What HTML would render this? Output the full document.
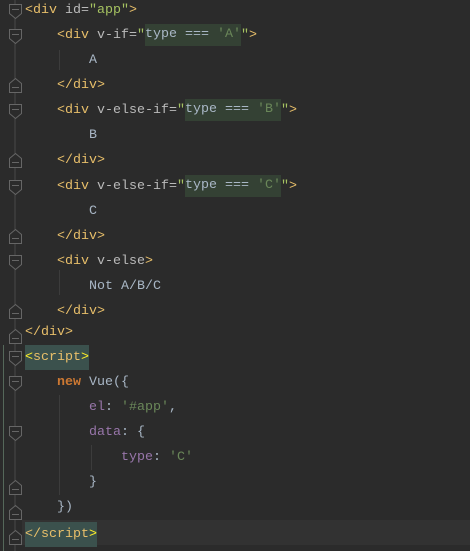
<!DOCTYPE html>
<html><head><style>
html,body{margin:0;padding:0;background:#2b2b2b;width:470px;height:551px;overflow:hidden;position:relative}
.l{position:absolute;left:25px;height:25px;line-height:25px;font-family:"Liberation Mono",monospace;font-size:13.33px;white-space:pre;color:#a9b7c6}
.t{color:#e8bf6a}.a{color:#bababa}.v{color:#a5c261}.s{color:#6a8759}.k{color:#cc7832;font-weight:bold}.p{color:#9876aa}
.hl{background:#344134;display:inline-block;line-height:22px;vertical-align:top;margin-top:1px}.sh{background:#3b514d;display:inline-block;line-height:25px;vertical-align:top}.y{color:#ffef28}
.cur{position:absolute;left:22px;right:0;top:520px;height:25px;background:#323232}
svg{position:absolute;left:0;top:0}
</style></head><body>
<div class="cur"></div>
<svg width="470" height="551">
<line x1="15" y1="0" x2="15" y2="551" stroke="#4a4a4a"/>
<line x1="3.5" y1="345" x2="3.5" y2="551" stroke="#55685a"/>
<line x1="59.5" y1="50" x2="59.5" y2="70" stroke="#3c3c3c"/>
<line x1="59.5" y1="270" x2="59.5" y2="295" stroke="#3c3c3c"/>
<line x1="59.5" y1="395" x2="59.5" y2="495" stroke="#3c3c3c"/>
<line x1="91.5" y1="445" x2="91.5" y2="470" stroke="#3c3c3c"/>
<g fill="#2b2b2b" stroke="#666" stroke-width="1">
<path d="M9.5 4.5h12v9l-6 5l-6-5z"/><line x1="12" y1="9.5" x2="19" y2="9.5"/>
<path d="M9.5 29.5h12v9l-6 5l-6-5z"/><line x1="12" y1="34.5" x2="19" y2="34.5"/>
<path d="M9.5 104.5h12v9l-6 5l-6-5z"/><line x1="12" y1="109.5" x2="19" y2="109.5"/>
<path d="M9.5 180.5h12v9l-6 5l-6-5z"/><line x1="12" y1="185.5" x2="19" y2="185.5"/>
<path d="M9.5 255.5h12v9l-6 5l-6-5z"/><line x1="12" y1="260.5" x2="19" y2="260.5"/>
<path d="M9.5 351.5h12v9l-6 5l-6-5z"/><line x1="12" y1="356.5" x2="19" y2="356.5"/>
<path d="M9.5 376.5h12v9l-6 5l-6-5z"/><line x1="12" y1="381.5" x2="19" y2="381.5"/>
<path d="M9.5 426.5h12v9l-6 5l-6-5z"/><line x1="12" y1="431.5" x2="19" y2="431.5"/>
<path d="M9.5 92.5h12v-9l-6-5l-6 5z"/><line x1="12" y1="87.5" x2="19" y2="87.5"/>
<path d="M9.5 167.5h12v-9l-6-5l-6 5z"/><line x1="12" y1="162.5" x2="19" y2="162.5"/>
<path d="M9.5 243.5h12v-9l-6-5l-6 5z"/><line x1="12" y1="238.5" x2="19" y2="238.5"/>
<path d="M9.5 318.5h12v-9l-6-5l-6 5z"/><line x1="12" y1="313.5" x2="19" y2="313.5"/>
<path d="M9.5 343.5h12v-9l-6-5l-6 5z"/><line x1="12" y1="338.5" x2="19" y2="338.5"/>
<path d="M9.5 494.5h12v-9l-6-5l-6 5z"/><line x1="12" y1="489.5" x2="19" y2="489.5"/>
<path d="M9.5 519.5h12v-9l-6-5l-6 5z"/><line x1="12" y1="514.5" x2="19" y2="514.5"/>
<path d="M9.5 544.5h12v-9l-6-5l-6 5z"/><line x1="12" y1="539.5" x2="19" y2="539.5"/>
</g>
</svg>
<div class="l" style="top:-2px"><span class="t">&lt;div</span> <span class="a">id=</span><span class="v">"app"</span><span class="t">&gt;</span></div>
<div class="l" style="top:23px">    <span class="t">&lt;div</span> <span class="a">v-if=</span><span class="v">"</span><span class="hl">type === <span class="s">'A'</span></span><span class="v">"</span><span class="t">&gt;</span></div>
<div class="l" style="top:48px">        A</div>
<div class="l" style="top:73px">    <span class="t">&lt;/div&gt;</span></div>
<div class="l" style="top:98px">    <span class="t">&lt;div</span> <span class="a">v-else-if=</span><span class="v">"</span><span class="hl">type === <span class="s">'B'</span></span><span class="v">"</span><span class="t">&gt;</span></div>
<div class="l" style="top:123px">        B</div>
<div class="l" style="top:148px">    <span class="t">&lt;/div&gt;</span></div>
<div class="l" style="top:174px">    <span class="t">&lt;div</span> <span class="a">v-else-if=</span><span class="v">"</span><span class="hl">type === <span class="s">'C'</span></span><span class="v">"</span><span class="t">&gt;</span></div>
<div class="l" style="top:199px">        C</div>
<div class="l" style="top:224px">    <span class="t">&lt;/div&gt;</span></div>
<div class="l" style="top:249px">    <span class="t">&lt;div</span> <span class="a">v-else</span><span class="t">&gt;</span></div>
<div class="l" style="top:274px">        Not A/B/C</div>
<div class="l" style="top:299px">    <span class="t">&lt;/div&gt;</span></div>
<div class="l" style="top:320px"><span class="t">&lt;/div&gt;</span></div>
<div class="l" style="top:345px"><span class="sh t"><span class="y">&lt;</span>script<span class="y">&gt;</span></span></div>
<div class="l" style="top:370px">    <span class="k">new</span> Vue({</div>
<div class="l" style="top:395px">        <span class="p">el</span>: <span class="s">'#app'</span>,</div>
<div class="l" style="top:420px">        <span class="p">data</span>: {</div>
<div class="l" style="top:445px">            <span class="p">type</span>: <span class="s">'C'</span></div>
<div class="l" style="top:470px">        }</div>
<div class="l" style="top:495px">    })</div>
<div class="l" style="top:522px"><span class="sh t">&lt;/script<span class="y">&gt;</span></span></div>
</body></html>
